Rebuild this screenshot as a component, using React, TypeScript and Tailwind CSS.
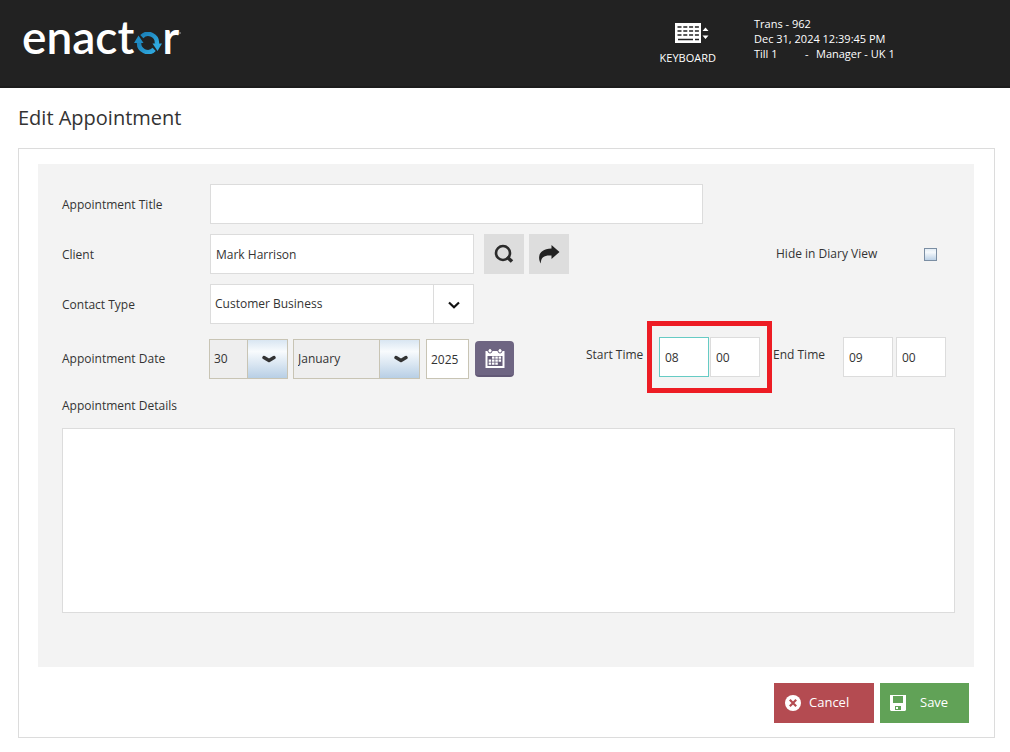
import { useState } from 'react';
import type { ReactNode } from 'react';

const days = Array.from({ length: 31 }, (_, i) => String(i + 1));
const months = [
  'January',
  'February',
  'March',
  'April',
  'May',
  'June',
  'July',
  'August',
  'September',
  'October',
  'November',
  'December',
];

const field = 'h-10 border border-[#dcdcdc] bg-white px-[5px] text-[#333] outline-none';

function Logo() {
  return (
    <div className="flex items-baseline font-['Lato',sans-serif] text-[46px] leading-[48px] font-semibold text-white" aria-label="enactor">
      <span>enact</span>
      <svg viewBox="0 0 28 22" className="h-[22px] w-7" aria-hidden="true">
        <defs>
          <linearGradient id="ring" x1="0" y1="0" x2="1" y2="1">
            <stop offset="0" stopColor="#1b80b8" />
            <stop offset="1" stopColor="#2fa8de" />
          </linearGradient>
        </defs>
        <g fill="none" stroke="url(#ring)" strokeWidth="4.400">
          <path d="M7.800 4.600A8.800 8.800 0 0 1 22.800 12" />
          <path d="M20.200 17.400A8.800 8.800 0 0 1 5.200 10" />
        </g>
        <path d="M0 11 4.500 3.500 9.500 11Z" fill="#1f8cc4" />
        <path d="M18.500 11.500H28L23.500 19Z" fill="#2fa8de" />
      </svg>
      <span>r</span>
      <svg viewBox="0 0 2 22" className="h-[22px] w-0.5" aria-hidden="true">
        <circle cx="1" cy="1" r="1" fill="#777" />
      </svg>
    </div>
  );
}

function KeyboardIcon() {
  return (
    <svg viewBox="0 0 34 20" className="h-5 w-[34px]" aria-hidden="true">
      <path d="M0 0H26V20H0Z" fill="#fff" />
      <g stroke="#222" strokeWidth="1.500">
        <path d="M2.500 4H24M2.500 8H24M2.500 12H24" strokeDasharray="4 1.800" />
        <path d="M3 16.500H18M20 16.500H24" />
      </g>
      <path d="M27.500 8 30.500 4.500 33.500 8ZM27.500 12.500H33.500L30.500 16Z" fill="#fff" />
    </svg>
  );
}

function Chevron({ heavy = false }: { heavy?: boolean }) {
  return heavy ? (
    <svg viewBox="0 0 14 8" className="h-2 w-3.5" aria-hidden="true">
      <path d="M2 2.500 7 5.500 12 2.500" fill="none" stroke="#333" strokeWidth="3.400" strokeLinecap="round" strokeLinejoin="round" />
    </svg>
  ) : (
    <svg viewBox="0 0 12 8" className="h-2 w-3" aria-hidden="true">
      <path d="M1 1.500 6 6.300 11 1.500" fill="none" stroke="#111" strokeWidth="2.200" />
    </svg>
  );
}

function CalendarIcon() {
  return (
    <svg viewBox="0 0 20 20" className="size-5" aria-hidden="true">
      <path d="M.5 3H19.500V20H.5Z" fill="#fff" />
      <path d="M2.500 8H17.500V18H2.500Z" fill="#675e7a" />
      <path
        d="M7 8.500H9.500V10.800H7ZM10.300 8.500H12.800V10.800H10.300ZM13.600 8.500H16.100V10.800H13.600ZM3.700 11.500H6.200V13.800H3.700ZM7 11.500H9.500V13.800H7ZM10.300 11.500H12.800V13.800H10.300ZM13.600 11.500H16.100V13.800H13.600ZM3.700 14.500H6.200V16.800H3.700ZM7 14.500H9.500V16.800H7ZM10.300 14.500H12.800V16.800H10.300Z"
        fill="#fff"
      />
      <rect x="3" y=".5" width="4" height="4.500" rx="2" fill="#fff" stroke="#675e7a" />
      <rect x="13" y=".5" width="4" height="4.500" rx="2" fill="#fff" stroke="#675e7a" />
    </svg>
  );
}

function Label({ htmlFor, children }: { htmlFor: string; children: ReactNode }) {
  return (
    <label htmlFor={htmlFor} className="w-[148px] shrink-0 pt-0.5">
      {children}
    </label>
  );
}

function DateSelect({ id, label, options, initial, className }: { id: string; label: string; options: string[]; initial: string; className: string }) {
  return (
    <div className={`relative ${className}`}>
      <select
        id={id}
        aria-label={label}
        defaultValue={initial}
        className="h-10 w-full appearance-none border border-[#c8c4b4] bg-[#eee] pr-10 pl-1 outline-none"
      >
        {options.map((option) => (
          <option key={option}>{option}</option>
        ))}
      </select>
      <span className="pointer-events-none absolute inset-y-0 right-0 flex w-[41px] items-center justify-center border border-[#c8c4b4] bg-linear-to-b from-[#d9e6f2] via-[#f8fbfd] via-30% to-[#b8cfe5] pl-0.5">
        <Chevron heavy />
      </span>
    </div>
  );
}

export default function App() {
  const [hidden, setHidden] = useState(false);

  return (
    <div className="min-h-screen bg-white font-['Open_Sans',sans-serif] text-xs text-[#333]">
      <header className="flex h-[88px] items-start border-b-2 border-[#1c1c1c] bg-[#222] pl-[22px] text-[11px] text-white">
        <div className="pt-[13px]">
          <Logo />
        </div>
        <button type="button" className="mt-[23px] ml-auto flex flex-col items-center gap-1.5">
          <span className="pl-2">
            <KeyboardIcon />
          </span>
          <span className="leading-[18px]">KEYBOARD</span>
        </button>
        <div className="mt-4 ml-[38px] w-64 leading-[15px]">
          <p>Trans - 962</p>
          <p>Dec 31, 2024 12:39:45 PM</p>
          <p className="flex">
            <span className="w-[51px]">Till 1</span>
            <span className="w-[11px]">-</span>
            <span>Manager - UK 1</span>
          </p>
        </div>
      </header>

      <main className="pr-[15px] pb-3.5 pl-[18px]">
        <h1 className="pt-4 text-xl leading-7 font-normal">Edit Appointment</h1>

        <form className="mt-4 border border-[#dcdcdc] px-5 pt-[15px] pb-3.5" onSubmit={(e) => e.preventDefault()}>
          <div className="-ml-px bg-[#f3f3f3] pt-5 pr-[19px] pb-[54px] pl-6">
            <div className="flex items-center">
              <Label htmlFor="title">Appointment Title</Label>
              <input id="title" type="text" className={`${field} w-[493px]`} />
            </div>

            <div className="mt-2.5 flex items-center">
              <Label htmlFor="client">Client</Label>
              <input id="client" type="text" defaultValue="Mark Harrison" className={`${field} w-[264px]`} />
              <button type="button" aria-label="Search" className="ml-2.5 flex size-10 items-center justify-center bg-[#ddd]">
                <svg viewBox="0 0 20 20" className="size-5" fill="none" stroke="#2b2b2b" aria-hidden="true">
                  <circle cx="9" cy="9" r="7" strokeWidth="2.600" />
                  <path d="m13 13 5 4.500" strokeWidth="3.600" />
                </svg>
              </button>
              <button type="button" aria-label="Go to client" className="ml-[5px] flex size-10 items-center justify-center bg-[#ddd]">
                <svg viewBox="0 0 22 20" className="h-5 w-[22px]" fill="#222" aria-hidden="true">
                  <path d="M13.500 1 21.500 8 13.500 15V11.500C7 11 2.800 12.500 2.800 19.500-.5 14 0 5 13.500 4.500Z" />
                </svg>
              </button>
              <label htmlFor="hide" className="ml-auto w-[148px]">
                Hide in Diary View
              </label>
              <input
                id="hide"
                type="checkbox"
                checked={hidden}
                onChange={(e) => setHidden(e.target.checked)}
                className="mr-[18px] size-[13px] appearance-none border border-[#7b8ea3] bg-linear-to-b from-[#e3edf6] via-[#f5f9fc] via-30% to-[#bdd2e7] checked:bg-[#7b8ea3]"
              />
            </div>

            <div className="mt-2.5 flex items-center">
              <Label htmlFor="contact">Contact Type</Label>
              <div className="relative w-[264px]">
                <select id="contact" className="h-10 w-full appearance-none border border-[#dcdcdc] bg-white pr-10 pl-1 outline-none">
                  <option>Customer Business</option>
                  <option>Personal</option>
                </select>
                <span className="pointer-events-none absolute inset-y-0 right-0 flex w-[41px] items-center justify-center border border-[#dcdcdc] pt-0.5">
                  <Chevron />
                </span>
              </div>
            </div>

            <div className="mt-[13px] flex h-[42px]">
              <div className="flex items-center self-end">
                <label htmlFor="day" className="w-[147px]">
                  Appointment Date
                </label>
                <DateSelect id="day" label="Day" options={days} initial="30" className="w-[79px]" />
                <DateSelect id="month" label="Month" options={months} initial="January" className="ml-[5px] w-[127px]" />
                <input
                  type="text"
                  aria-label="Year"
                  defaultValue="2025"
                  className="ml-1.5 h-10 w-[43px] border border-[#c8c4b4] bg-white px-1 outline-none"
                />
                <button
                  type="button"
                  aria-label="Open calendar"
                  className="ml-1.5 flex h-9 w-[39px] items-center justify-center rounded-sm border-b-2 border-[#625976] bg-[#6e6582]"
                >
                  <CalendarIcon />
                </button>
              </div>

              <div className="ml-auto flex items-center self-start pr-[9px]">
                <label htmlFor="start" className="w-[73px] pb-1">
                  Start Time
                </label>
                <div className="relative flex gap-px">
                  <input id="start" type="text" defaultValue="08" className="h-10 w-[50px] border border-[#66cbc4] bg-white px-[5px] outline-none" />
                  <input type="text" aria-label="Start minutes" defaultValue="00" className={`${field} w-[50px]`} />
                  <span className="pointer-events-none absolute -inset-x-3 -inset-y-4 border-5 border-[#ed1c24]" />
                </div>
                <label htmlFor="end" className="ml-[13px] w-[70px] pb-1">
                  End Time
                </label>
                <div className="flex gap-[3px]">
                  <input id="end" type="text" defaultValue="09" className={`${field} w-[50px]`} />
                  <input type="text" aria-label="End minutes" defaultValue="00" className={`${field} w-[50px]`} />
                </div>
              </div>
            </div>

            <label htmlFor="details" className="mt-[17px] block leading-5">
              Appointment Details
            </label>
            <textarea id="details" className="mt-3 block h-[185px] w-full resize-none border border-[#dcdcdc] bg-white p-[5px] outline-none" />
          </div>

          <div className="mt-4 flex justify-end gap-1.5 pr-[5px] text-[13px] text-white">
            <button type="button" className="flex h-10 w-[100px] items-center gap-2 bg-[#b44b51] pl-[11px]">
              <svg viewBox="0 0 16 16" className="size-4" aria-hidden="true">
                <circle cx="8" cy="8" r="8" fill="#fff" />
                <path d="m4.800 4.800 6.400 6.400m0-6.400-6.400 6.400" stroke="#b44b51" strokeWidth="2.200" />
              </svg>
              Cancel
            </button>
            <button type="submit" className="flex h-10 w-[89px] items-center gap-3.5 bg-[#61a257] pl-2.5">
              <svg viewBox="0 0 16 16" className="size-4" aria-hidden="true">
                <path d="M0 0H16V15L15 16H1L0 15Z" fill="#fff" />
                <path d="M3 1H13V8H3ZM5 11H11V15H5Z" fill="#61a257" />
                <path d="M6 12H8V14H6Z" fill="#fff" />
              </svg>
              Save
            </button>
          </div>
        </form>
      </main>
    </div>
  );
}
